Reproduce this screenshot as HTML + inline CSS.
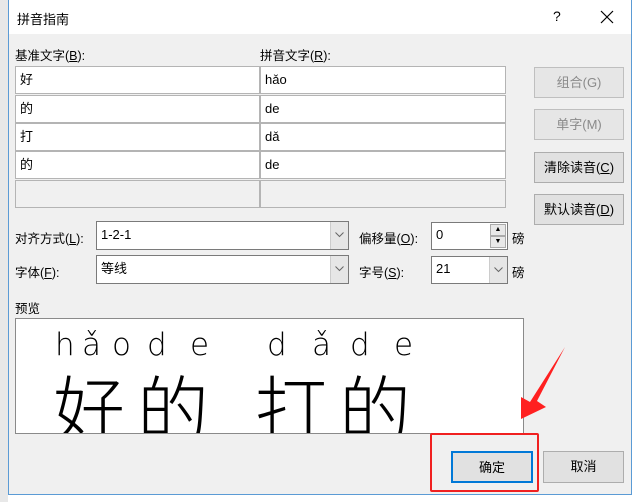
<!DOCTYPE html>
<html><head><meta charset="utf-8"><style>
*{margin:0;padding:0;box-sizing:border-box}
body{width:640px;height:502px;background:#fff;position:relative;overflow:hidden;font-family:"Liberation Sans","Noto Sans CJK SC",sans-serif;font-size:12px;color:#000}
.a{position:absolute}
.win{left:8px;top:0;width:624px;height:495px;background:#f0f0f0;border:1px solid #5b9bd5;border-top:none}
.tb{left:9px;top:0;width:622px;height:34px;background:#fff}
.cell{position:absolute;background:#fff;border:1px solid #b4b4b4;height:28px;line-height:26px;padding-left:4px;font-size:13px}
.btn{position:absolute;background:#e1e1e1;border:1px solid #adadad;text-align:center;font-size:13px}
.dis{color:#8a8a8a;border-color:#bfbfbf;background:#e6e6e6}
.box{position:absolute;background:#fff;border:1px solid #7a7a7a;font-size:13px;padding-left:4px;line-height:26px}
.dd{position:absolute;top:0;right:0;width:18px;height:100%;background:#e6e6e6;border-left:1px solid #ccc}
.dd svg{position:absolute;left:4px;top:10px}
u{text-decoration:underline}
.py{position:absolute;top:8px;font-size:31px;font-family:'DejaVu Sans',sans-serif;font-weight:300}
.hz{position:absolute;top:46px;font-size:72px;line-height:80px;font-family:'Noto Sans CJK SC',sans-serif;font-weight:300}
</style></head><body>
<div class="a" style="left:0;top:0;width:8px;height:502px;background:#e8e8e8"></div>
<div class="a win"></div>
<div class="a tb"></div>
<div class="a" style="left:17px;top:9px;font-size:13px">拼音指南</div>
<div class="a" style="left:553px;top:8px;font-size:14px">?</div>
<svg class="a" style="left:600px;top:10px" width="14" height="14"><path d="M1 1L13 13M13 1L1 13" stroke="#000" stroke-width="1.2"/></svg>
<div class="a" style="left:15px;top:45px;font-size:12.5px">基准文字(<u>B</u>):</div>
<div class="a" style="left:260px;top:45px;font-size:12.5px">拼音文字(<u>R</u>):</div>

<div class="cell" style="left:15px;top:66px;width:245px">好</div>
<div class="cell" style="left:260px;top:66px;width:246px">hǎo</div>
<div class="cell" style="left:15px;top:95px;width:245px">的</div>
<div class="cell" style="left:260px;top:95px;width:246px">de</div>
<div class="cell" style="left:15px;top:123px;width:245px">打</div>
<div class="cell" style="left:260px;top:123px;width:246px">dǎ</div>
<div class="cell" style="left:15px;top:151px;width:245px">的</div>
<div class="cell" style="left:260px;top:151px;width:246px">de</div>
<div class="cell" style="left:15px;top:180px;width:245px;background:#f0f0f0"></div>
<div class="cell" style="left:260px;top:180px;width:246px;background:#f0f0f0"></div>

<div class="btn dis" style="left:534px;top:67px;width:90px;height:31px;line-height:29px">组合(G)</div>
<div class="btn dis" style="left:534px;top:109px;width:90px;height:31px;line-height:29px">单字(M)</div>
<div class="btn" style="left:534px;top:152px;width:90px;height:31px;line-height:29px">清除读音(<u>C</u>)</div>
<div class="btn" style="left:534px;top:194px;width:90px;height:31px;line-height:29px">默认读音(<u>D</u>)</div>

<div class="a" style="left:15px;top:228px;font-size:12.5px">对齐方式(<u>L</u>):</div>
<div class="box" style="left:96px;top:221px;width:253px;height:29px">1-2-1<div class="dd"><svg width="9" height="6"><path d="M0.5 0.5L4.5 4.5L8.5 0.5" stroke="#666" fill="none"/></svg></div></div>
<div class="a" style="left:15px;top:262px;font-size:12.5px">字体(<u>F</u>):</div>
<div class="box" style="left:96px;top:255px;width:253px;height:29px">等线<div class="dd"><svg width="9" height="6"><path d="M0.5 0.5L4.5 4.5L8.5 0.5" stroke="#666" fill="none"/></svg></div></div>

<div class="a" style="left:359px;top:228px;font-size:12.5px">偏移量(<u>O</u>):</div>
<div class="box" style="left:431px;top:222px;width:77px;height:28px;line-height:24px">0
<div style="position:absolute;right:1px;top:1px;width:16px;height:12px;background:#e8e8e8;border:1px solid #aaa;font-size:7px;line-height:10px;text-align:center">▲</div>
<div style="position:absolute;right:1px;top:13px;width:16px;height:12px;background:#e8e8e8;border:1px solid #aaa;font-size:7px;line-height:10px;text-align:center">▼</div></div>
<div class="a" style="left:512px;top:228px;font-size:12.5px">磅</div>
<div class="a" style="left:359px;top:262px;font-size:12.5px">字号(<u>S</u>):</div>
<div class="box" style="left:431px;top:256px;width:77px;height:28px;line-height:24px">21<div class="dd"><svg width="9" height="6"><path d="M0.5 0.5L4.5 4.5L8.5 0.5" stroke="#666" fill="none"/></svg></div></div>
<div class="a" style="left:512px;top:262px;font-size:12.5px">磅</div>

<div class="a" style="left:15px;top:298px;font-size:12.5px">预览</div>
<div class="a" style="left:15px;top:318px;width:509px;height:116px;background:#fff;border:1px solid #8a8a8a;overflow:hidden">
<span class="py" style="left:39px">h</span><span class="py" style="left:66px">ǎ</span><span class="py" style="left:96px">o</span><span class="py" style="left:131px">d</span><span class="py" style="left:174px">e</span>
<span class="py" style="left:251px">d</span><span class="py" style="left:296px">ǎ</span><span class="py" style="left:334px">d</span><span class="py" style="left:378px">e</span>
<span class="hz" style="left:37px">好</span><span class="hz" style="left:121px">的</span><span class="hz" style="left:239px">打</span><span class="hz" style="left:323px">的</span>
</div>

<div class="btn" style="left:451px;top:451px;width:82px;height:32px;line-height:30px;border:2px solid #0078d7">确定</div>
<div class="btn" style="left:543px;top:451px;width:81px;height:32px;line-height:30px">取消</div>
<div class="a" style="left:430px;top:433px;width:109px;height:59px;border:2px solid #f02020;border-radius:2px"></div>
<svg class="a" style="left:0;top:0" width="640" height="502"><polygon points="565,347 537,401 546,407 521,419 521,397 530,402" fill="#ff2020"/></svg>
</body></html>
